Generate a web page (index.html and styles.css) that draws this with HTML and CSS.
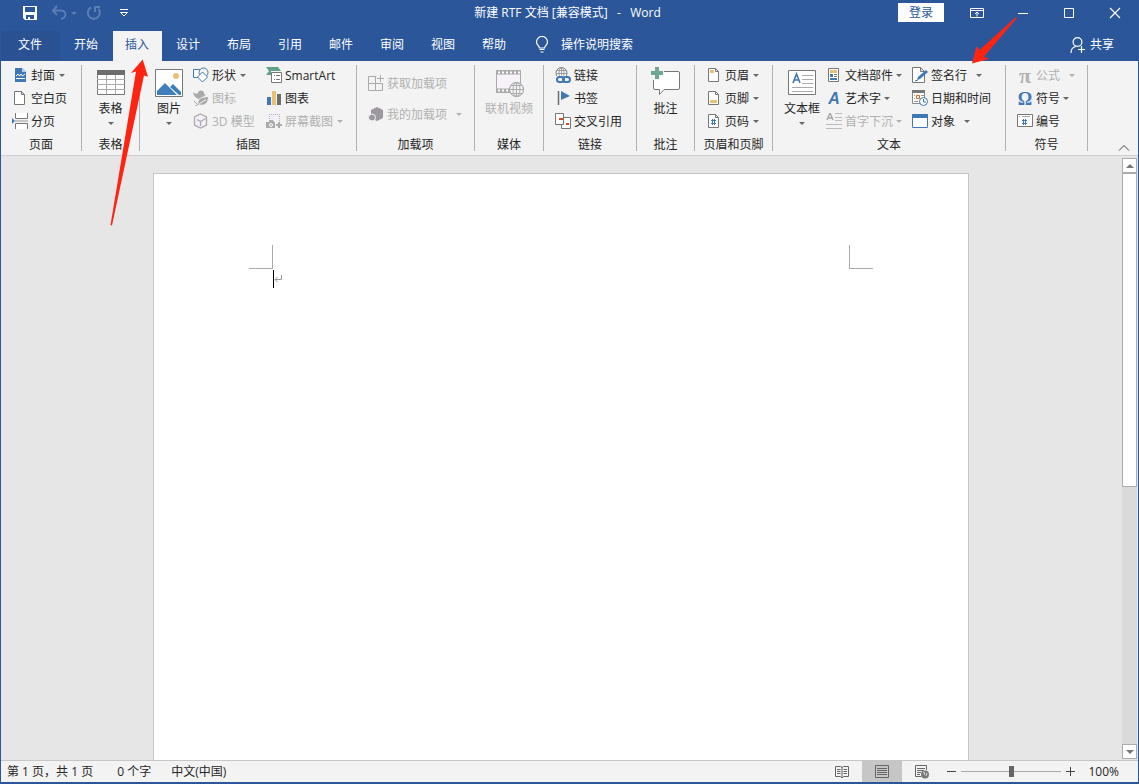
FILE: index.html
```
<!DOCTYPE html>
<html lang="zh-CN">
<head>
<meta charset="utf-8">
<title>新建 RTF 文档 [兼容模式] - Word</title>
<link rel="stylesheet" href="styles.css">
</head>
<body>
<div class="window">
  <header class="titlebar">
    <div class="quick-access">
      <button class="qa-btn" aria-label="保存"><svg width="16" height="16" viewBox="0 0 16 16"><path d="M1 1h14v14H3l-2-2z" fill="#fff"/><path d="M3 2h10v5H3zM4 10h8v4H4z" fill="#2b579a"/><path d="M6 12h2v2H6z" fill="#fff"/></svg></button>
      <button class="qa-btn faded undo" aria-label="撤消"><svg width="16" height="16" viewBox="0 0 16 16"><path d="M6 1L2 5.500l4 4.500M2.500 5.500H10c3 0 4.500 2 4.500 4s-2 4-4.500 4.500" fill="none" stroke="currentColor" stroke-width="2"/></svg><svg class="caret" viewBox="0 0 6 3"><path d="M0 0h6L3 3z"/></svg></button>
      <button class="qa-btn faded redo" aria-label="重复"><svg width="16" height="16" viewBox="0 0 16 16"><path d="M5 2.500A6 6 0 1 0 12.500 4M8 2h6M9 1.500V7" fill="none" stroke="currentColor" stroke-width="2"/></svg></button>
      <button class="qa-btn" aria-label="自定义快速访问工具栏"><svg width="10" height="10" viewBox="0 0 10 10"><path d="M1 1.500h8M1.500 4.500h7L5 8z" fill="none" stroke="#fff"/></svg></button>
    </div>
    <h1 class="title">新建 RTF 文档 [兼容模式]&nbsp;&nbsp; -&nbsp;&nbsp; Word</h1>
    <div class="window-controls">
      <button class="login">登录</button>
      <button class="win-btn" aria-label="功能区显示选项"><svg width="14" height="12" viewBox="0 0 14 12"><path d="M.5 1.500h13v9H.5zM.5 3.500h13M7 9.500V5.500M5 7l2-2 2 2" fill="none" stroke="#fff"/></svg></button>
      <button class="win-btn" aria-label="最小化"><svg width="12" height="12" viewBox="0 0 12 12"><path d="M1 6.500h10" stroke="#fff"/></svg></button>
      <button class="win-btn" aria-label="最大化"><svg width="12" height="12" viewBox="0 0 12 12"><path d="M1.500 1.500h9v9h-9z" fill="none" stroke="#fff"/></svg></button>
      <button class="win-btn" aria-label="关闭"><svg width="12" height="12" viewBox="0 0 12 12"><path d="M1 1l10 10M11 1L1 11" stroke="#fff" stroke-width="1.200"/></svg></button>
    </div>
  </header>

  <nav class="tabs">
    <button class="tab file">文件</button>
    <button class="tab">开始</button>
    <button class="tab active">插入</button>
    <button class="tab">设计</button>
    <button class="tab">布局</button>
    <button class="tab">引用</button>
    <button class="tab">邮件</button>
    <button class="tab">审阅</button>
    <button class="tab">视图</button>
    <button class="tab">帮助</button>
    <button class="tell-me"><svg width="14" height="18" viewBox="0 0 14 18"><path d="M4.500 12c0-2-3-3-3-6a5.300 5.300 0 0 1 11 0c0 3-3 4-3 6zM4.500 13.500h5M5.500 16h3" fill="none" stroke="#fff" stroke-width="1.200"/></svg>操作说明搜索</button>
    <button class="share"><svg width="16" height="18" viewBox="0 0 16 18"><circle cx="7.500" cy="6" r="4.400" fill="none" stroke="#fff" stroke-width="1.200"/><path d="M1 17c0-4 2-6 5-6.500M11.500 10v7M8 13.500h7" fill="none" stroke="#fff" stroke-width="1.200"/></svg>共享</button>
  </nav>

  <section class="ribbon">
    <div class="group g-pages">
      <div class="body">
        <div class="stack">
          <button class="cmd"><svg class="ico" viewBox="0 0 16 16"><path d="M3 1h7l4 4v10H3z" fill="#3f78b5"/><path d="M10 1v4h4" fill="#b5cde6"/><path d="M4 9l2-2 1.500 2L9 7l1.500 2L13 7M4 11.500h9" fill="none" stroke="#fff"/></svg>封面<svg class="caret" viewBox="0 0 6 3"><path d="M0 0h6L3 3z"/></svg></button>
          <button class="cmd"><svg class="ico" viewBox="0 0 16 16"><path d="M2.500 1.500h7l3 3v10h-10zM9.500 1.500v3h3" fill="#fff" stroke="#777"/></svg>空白页</button>
          <button class="cmd"><svg class="ico" viewBox="0 0 16 16"><path d="M3.500 0v5.500h12V0M3.500 16v-5.500h12V16" fill="#fff" stroke="#777"/><path d="M3 8h13" stroke="#999"/><path d="M0 5l3 3-3 3z" fill="#3f78b5"/></svg>分页</button>
        </div>
      </div>
      <div class="label">页面</div>
    </div>

    <div class="group g-table">
      <div class="body">
        <button class="big"><svg class="bico" viewBox="0 0 30 28"><path d="M1.500 1.500h27v24h-27z" fill="#fff" stroke="#777"/><path d="M1 1h28v5H1z" fill="#6d6d6d"/><path d="M1 10.500h28M1 15.500h28M1 20.500h28M10.500 6v19M19.500 6v19" stroke="#aaa"/></svg><span>表格</span><svg class="caret" viewBox="0 0 6 3"><path d="M0 0h6L3 3z"/></svg></button>
      </div>
      <div class="label">表格</div>
    </div>

    <div class="group g-illus">
      <div class="body">
        <button class="big"><svg class="bico" viewBox="0 0 30 28"><path d="M1.500.5h27v27h-27z" fill="#fff" stroke="#777"/><path d="M3 26v-4l8-8 12 12zM16 18l3-3 8 8v3h-2z" fill="#3f7fbc"/><circle cx="22" cy="7" r="3" fill="#e8c173"/></svg><span>图片</span><svg class="caret" viewBox="0 0 6 3"><path d="M0 0h6L3 3z"/></svg></button>
        <div class="stack">
          <button class="cmd"><svg class="ico" viewBox="0 0 16 16"><path d="M.5 2.500h9v8h-9z" fill="#fff" stroke="#3f78b5"/><circle cx="10.500" cy="5.500" r="4.500" fill="#f3f3f3" stroke="#3f78b5"/><path d="M9.500 5l5 5-5 5-5-5z" fill="#fff" stroke="#3f78b5"/></svg>形状<svg class="caret" viewBox="0 0 6 3"><path d="M0 0h6L3 3z"/></svg></button>
          <button class="cmd" disabled><svg class="ico" viewBox="0 0 16 16"><path d="M0 2c2 2 3 2 5 1 0-4 7-3 6 1l2 1-2 1c-1 5-10 4-11-4z" fill="#aaa"/><path d="M5 14.500C4 8 9 7 15.500 6.500 15.500 13 12 17 5 14.500z" fill="#aaa" stroke="#f3f3f3"/><path d="M2 16l4-2M1 11l3 3" stroke="#aaa"/><path d="M6 14l7-4.500" stroke="#f3f3f3"/></svg>图标</button>
          <button class="cmd" disabled><svg class="ico" viewBox="0 0 16 16"><path d="M7.500 1l6 3v8l-6 3-6-3V4zM4 6.500l3.500 2 5-3M7.500 8.500V13" fill="#f5effa" stroke="#aaa" stroke-width="1.300"/></svg>3D 模型</button>
        </div>
        <div class="stack">
          <button class="cmd"><svg class="ico" viewBox="0 0 16 16"><path d="M0 0h12l3 4H5v4H0l3-4z" fill="#5fa189"/><path d="M5.500 5.500h10v10h-10z" fill="#fff" stroke="#777"/><path d="M8 8.500h1M10 8.500h4M8 12.500h1M10 12.500h4" stroke="#777"/></svg>SmartArt</button>
          <button class="cmd"><svg class="ico" viewBox="0 0 16 16"><path d="M1 7h4v8H1z" fill="#3f78b5"/><path d="M6 1h4v14H6z" fill="#e8c173"/><path d="M11 4h4v11h-4z" fill="#6d6d6d"/></svg>图表</button>
          <button class="cmd" disabled><svg class="ico" viewBox="0 0 16 16"><path d="M3.500 8V1.500h10V9" fill="#f5effa" stroke="#b5a9bc" stroke-dasharray="1 1"/><path d="M0 9h3l1-2h3l1 2h1v6H0z" fill="#aaa"/><circle cx="5" cy="12" r="1.500" fill="#aaa" stroke="#fff"/><path d="M13 9v6M10 12h6" stroke="#aaa" stroke-width="2"/></svg>屏幕截图<svg class="caret" viewBox="0 0 6 3"><path d="M0 0h6L3 3z"/></svg></button>
        </div>
      </div>
      <div class="label">插图</div>
    </div>

    <div class="group g-addins">
      <div class="body">
        <div class="stack pair">
          <button class="cmd" disabled><svg class="ico" viewBox="0 0 16 16"><path d="M8.500 1.500h-8v14h14V8.500H.5M7.500 1.500v14M12.500 0v7M9 3.500h7" fill="none" stroke="#aaa"/></svg>获取加载项</button>
          <button class="cmd" disabled><svg class="ico" viewBox="0 0 16 16"><path d="M9 1l6 3v8l-6 3-6-3V4z" fill="#9d989f"/><circle cx="4" cy="11.500" r="3.500" fill="#9d989f" stroke="#f3f3f3"/></svg>我的加载项<svg class="caret far" viewBox="0 0 6 3"><path d="M0 0h6L3 3z"/></svg></button>
        </div>
      </div>
      <div class="label">加载项</div>
    </div>

    <div class="group g-media">
      <div class="body">
        <button class="big" disabled><svg class="bico" viewBox="0 0 30 28"><path d="M2.500 1.500h24v22h-24z" fill="#f7f1fa" stroke="#aaa"/><path d="M2 3.500h25M2 21.500h13" stroke="#aaa" stroke-width="4"/><path d="M4 3.500h22M4 21.500h11" stroke="#fff" stroke-width="2" stroke-dasharray="2 2"/><circle cx="22.500" cy="20.500" r="7" fill="#f5f3f5" stroke="#999"/><path d="M22.500 13.500v14M15.500 20.500h14M17 16.500h11M17 24.500h11" stroke="#aaa"/><ellipse cx="22.500" cy="20.500" rx="3.500" ry="7" fill="none" stroke="#aaa"/></svg><span>联机视频</span></button>
      </div>
      <div class="label">媒体</div>
    </div>

    <div class="group g-links">
      <div class="body">
        <div class="stack">
          <button class="cmd"><svg class="ico" viewBox="0 0 16 16"><circle cx="6.500" cy="6" r="5.500" fill="#fff" stroke="#777"/><path d="M1 6.500h11M2 3.500h9M6.500.500v8" stroke="#999"/><ellipse cx="6.500" cy="6" rx="2.500" ry="5.500" fill="none" stroke="#999"/><path d="M1 9h15v7H1z" fill="#f3f3f3"/><rect x="2" y="10" width="7" height="5" rx="2.500" fill="none" stroke="#3f78b5" stroke-width="2"/><rect x="8" y="10" width="7" height="5" rx="2.500" fill="none" stroke="#3f78b5" stroke-width="2"/></svg>链接</button>
          <button class="cmd"><svg class="ico" viewBox="0 0 16 16"><path d="M3.500 1v14" stroke="#6d6d6d" stroke-width="1.500"/><path d="M6 1l9 5-9 4z" fill="#3f78b5"/></svg>书签</button>
          <button class="cmd"><svg class="ico" viewBox="0 0 16 16"><path d="M6.500 4.500h9v11h-9z" fill="#fff" stroke="#777"/><path d="M.5.500h8v11h-8z" fill="#fff" stroke="#777"/><path d="M4 6h4M11 11h3" stroke="#d64b20" stroke-width="2"/></svg>交叉引用</button>
        </div>
      </div>
      <div class="label">链接</div>
    </div>

    <div class="group g-comment">
      <div class="body">
        <button class="big"><svg class="bico" viewBox="0 0 30 28"><path d="M4 2.500h23q1.500 0 1.500 1.500v15q0 1.500-1.500 1.500H13l-4.500 5v-5H4q-1.500 0-1.500-1.500V4q0-1.500 1.500-1.500z" fill="#fff" stroke="#777"/><path d="M0-1h9v3h4v5H9v4H2V7H0z" fill="#f3f3f3"/><path d="M6 -2v12M0 4h12" stroke="#6fa797" stroke-width="4"/></svg><span>批注</span></button>
      </div>
      <div class="label">批注</div>
    </div>

    <div class="group g-header">
      <div class="body">
        <div class="stack">
          <button class="cmd"><svg class="ico" viewBox="0 0 16 16"><path d="M2.500 1.500h7l3 3v10h-10zM9.500 1.500v3h3" fill="#fff" stroke="#777"/><path d="M4 3h4v3H4z" fill="#e8c173"/></svg>页眉<svg class="caret" viewBox="0 0 6 3"><path d="M0 0h6L3 3z"/></svg></button>
          <button class="cmd"><svg class="ico" viewBox="0 0 16 16"><path d="M2.500 1.500h7l3 3v10h-10zM9.500 1.500v3h3" fill="#fff" stroke="#777"/><path d="M4 10h7v3H4z" fill="#e8c173"/></svg>页脚<svg class="caret" viewBox="0 0 6 3"><path d="M0 0h6L3 3z"/></svg></button>
          <button class="cmd"><svg class="ico" viewBox="0 0 16 16"><path d="M2.500 1.500h7l3 3v10h-10zM9.500 1.500v3h3" fill="#fff" stroke="#777"/><path d="M6.500 6v6M8.500 6v6M5 7.500h5M5 10.500h5" stroke="#3f78b5"/></svg>页码<svg class="caret" viewBox="0 0 6 3"><path d="M0 0h6L3 3z"/></svg></button>
        </div>
      </div>
      <div class="label">页眉和页脚</div>
    </div>

    <div class="group g-text">
      <div class="body">
        <button class="big"><svg class="bico" viewBox="0 0 30 28"><path d="M1.500 1.500h27v24h-27z" fill="#fff" stroke="#777"/><path d="M6 14l3.500-9 3.500 9M7 11h5" fill="none" stroke="#3f78b5" stroke-width="1.600"/><path d="M15 6.500h11M15 10.500h11M15 14.500h11M5 18.500h21M5 22.500h21" stroke="#aaa"/></svg><span>文本框</span><svg class="caret" viewBox="0 0 6 3"><path d="M0 0h6L3 3z"/></svg></button>
        <div class="stack">
          <button class="cmd"><svg class="ico" viewBox="0 0 16 16"><path d="M2.500 1.500h10v13h-10z" fill="#fff" stroke="#777"/><path d="M4 3h7v3H4z" fill="#e8c173"/><path d="M4 7h3v3H4z" fill="#3f78b5"/><path d="M8 7.500h3M8 9.500h3" stroke="#777"/><path d="M4 12h7" stroke="#3f78b5" stroke-width="2"/></svg>文档部件<svg class="caret tight" viewBox="0 0 6 3"><path d="M0 0h6L3 3z"/></svg></button>
          <button class="cmd"><span class="glyph art">A</span>艺术字<svg class="caret tight" viewBox="0 0 6 3"><path d="M0 0h6L3 3z"/></svg></button>
          <button class="cmd" disabled><svg class="ico" viewBox="0 0 16 16"><path d="M1 7l3-7 3 7M2 5h4" fill="none" stroke="#aaa" stroke-width="1.500"/><path d="M9 .5h7M9 4.500h7M9 7.500h7M0 11.500h16M0 15.500h16" stroke="#bbb"/></svg>首字下沉<svg class="caret tight" viewBox="0 0 6 3"><path d="M0 0h6L3 3z"/></svg></button>
        </div>
        <div class="stack">
          <button class="cmd"><svg class="ico" viewBox="0 0 16 16"><path d="M.5.500h8l4 4v11H.5zM8.500.500v4h4" fill="#fff" stroke="#777"/><path d="M5 13l1-3 8-7 2 2-8 7z" fill="#3f78b5"/><path d="M3 14l3-1" stroke="#3f78b5"/></svg>签名行<svg class="caret far" viewBox="0 0 6 3"><path d="M0 0h6L3 3z"/></svg></button>
          <button class="cmd"><svg class="ico" viewBox="0 0 16 16"><path d="M.5 1.500h12v12H.5z" fill="#fff" stroke="#888"/><path d="M0 0h13v3H0z" fill="#777"/><path d="M2 5.500h1M9 5.500h3M2 8.500h1M2 11.500h4" stroke="#999"/><path d="M4.500 5.500h3v3h-3z" fill="#fff" stroke="#d66b20"/><circle cx="11.500" cy="11.500" r="4" fill="#fff" stroke="#3f78b5"/><path d="M11.500 9v3h2.500" fill="none" stroke="#3f78b5"/></svg>日期和时间</button>
          <button class="cmd"><svg class="ico" viewBox="0 0 16 16"><path d="M.5 1.500h15v13H.5z" fill="#fff" stroke="#3f78b5"/><path d="M0 1h16v4H0z" fill="#3f78b5"/></svg>对象<svg class="caret far" viewBox="0 0 6 3"><path d="M0 0h6L3 3z"/></svg></button>
        </div>
      </div>
      <div class="label">文本</div>
    </div>

    <div class="group g-symbols">
      <div class="body">
        <div class="stack">
          <button class="cmd" disabled><span class="glyph pi">π</span>公式<svg class="caret far" viewBox="0 0 6 3"><path d="M0 0h6L3 3z"/></svg></button>
          <button class="cmd"><span class="glyph omega">Ω</span>符号<svg class="caret tight" viewBox="0 0 6 3"><path d="M0 0h6L3 3z"/></svg></button>
          <button class="cmd"><svg class="ico" viewBox="0 0 16 16"><path d="M.5 1.500h15v12H.5z" fill="#fff" stroke="#777"/><path d="M2 3.500h1M5 3.500h8" stroke="#aaa"/><path d="M6.500 6v6M8.500 6v6M5 7.500h5M5 10.500h5" stroke="#3f78b5"/></svg>编号</button>
        </div>
      </div>
      <div class="label">符号</div>
    </div>
    <button class="collapse" aria-label="折叠功能区"><svg width="12" height="6" viewBox="0 0 12 6"><path d="M1 5.500l5-5 5 5" fill="none" stroke="#444"/></svg></button>
  </section>

  <main class="workspace">
    <div class="canvas">
      <article class="page">
        <div class="margins"><i class="corner left"></i><i class="corner right"></i></div>
        <p class="line"><span class="cursor"></span><svg width="8" height="8" viewBox="0 0 8 8"><path d="M7.500 0v4.500H1M3.500 2L1 4.500 3.500 7" fill="none" stroke="#999"/></svg></p>
      </article>
    </div>
    <div class="scrollbar">
      <button class="scroll-btn" aria-label="向上滚动"><svg width="8" height="4" viewBox="0 0 8 4"><path d="M0 4h8L4 0z" fill="#777"/></svg></button>
      <div class="track"><div class="thumb"></div></div>
      <button class="scroll-btn" aria-label="向下滚动"><svg width="8" height="4" viewBox="0 0 8 4"><path d="M0 0h8L4 4z" fill="#777"/></svg></button>
    </div>
  </main>

  <footer class="status">
    <span class="page-count">第 1 页，共 1 页</span>
    <span class="word-count">0 个字</span>
    <span>中文(中国)</span>
    <div class="views">
      <button class="view" aria-label="阅读视图"><svg width="14" height="14" viewBox="0 0 14 14"><path d="M.5 1.500h5l1.500 1 1.500-1h5v10h-5L7 13l-1.500-1.500h-5zM7 2v11M2 4.500h3.500M2 6.500h3.500M2 8.500h3.500M8.500 4.500H12M8.500 6.500H12M8.500 8.500H12" fill="none" stroke="#666"/></svg></button>
      <button class="view on" aria-label="页面视图"><svg width="14" height="14" viewBox="0 0 14 14"><path d="M.5.500h13v12H.5zM2 3.500h10M2 5.500h10M2 7.500h10M2 9.500h10" fill="none" stroke="#666"/></svg></button>
      <button class="view" aria-label="Web 版式视图"><svg width="14" height="14" viewBox="0 0 14 14"><path d="M6 11.500H.5V.500h11V5M2 3.500h8M2 5.500h7M2 7.500h4M2 9.500h3" fill="none" stroke="#666"/><circle cx="10" cy="9.500" r="4" fill="#777"/><path d="M8 7l2 1-1 2M12 8l-1 3" fill="none" stroke="#ddd"/></svg></button>
      <button class="zoom-btn" aria-label="缩小"><svg width="9" height="9" viewBox="0 0 9 9"><path d="M0 4.500h9" stroke="#444"/></svg></button>
      <input class="zoom" type="range" min="0" max="100" value="50" aria-label="显示比例">
      <button class="zoom-btn" aria-label="放大"><svg width="9" height="9" viewBox="0 0 9 9"><path d="M0 4.500h9M4.500 0v9" stroke="#444"/></svg></button>
      <span class="percent">100%</span>
    </div>
  </footer>
  <svg class="arrows" width="1139" height="240" viewBox="0 0 1139 240" aria-hidden="true"><path d="M142.700 59.500L131 73l5-1.500L110.500 225l1.500.500L144 75.500l4 1.200zM972 63.500l4.500-17.500 3 4L1016 17l1 1-33 38.500 5 2.500z" fill="#ff2312"/></svg>
</div>
</body>
</html>
```

FILE: styles.css
```
* { box-sizing: border-box; }
body { margin: 0; font: 12px/16px "Open Sans", "Noto Sans CJK SC", sans-serif; color: #262626; }
button { font: inherit; color: inherit; background: none; border: 0; padding: 0; margin: 0; white-space: nowrap; }
svg { flex: none; display: block; }

.window { position: relative; display: flex; flex-direction: column; height: 100vh; overflow: hidden; border: 1px solid #2b579a; border-top: 0; border-bottom-width: 2px; background: #2b579a; }

.titlebar { display: grid; grid-template-columns: 1fr auto 1fr; height: 31px; color: #fff; }
.quick-access { display: flex; align-items: center; gap: 17px; padding: 0 0 5px 21px; }
.qa-btn { display: flex; align-items: center; }
.undo { margin-left: -4px; }
.redo { margin-left: -8px; }
.faded { color: #5a7db4; }
.title { margin: 0; padding-right: 4px; font-size: 12px; line-height: 26px; font-weight: 400; }
.window-controls { display: flex; justify-content: flex-end; height: 25px; }
.login { width: 46px; height: 19px; margin: 3px 10px 0 0; background: #fff; color: #2b579a; }
.win-btn { display: flex; align-items: center; justify-content: center; width: 46px; }

.tabs { display: flex; gap: 2px; height: 30px; color: #fff; }
.tab { width: 49px; padding: 0 1px 2px 0; }
.tab.file { width: 59px; background: #2a5293; }
.tab.active { background: #f3f3f3; color: #2b579a; }
.tell-me, .share { display: flex; align-items: center; }
.tell-me { gap: 12px; margin-left: 14px; padding-bottom: 2px; }
.share { gap: 4px; margin-left: auto; padding: 0 24px 2px 0; }

.ribbon { display: flex; padding: 4px 0; background: #f3f3f3; border-bottom: 1px solid #d0d0d0; }
.group { flex: none; height: 86px; border-right: 1px solid #b1b1b1; }
.body { display: flex; height: 67px; padding-left: 11px; }
.label { margin-top: 6px; line-height: 13px; text-align: center; white-space: nowrap; }
.stack { display: flex; flex-direction: column; gap: 2px; }
.pair { gap: 10px; padding-top: 8px; }
.cmd { display: flex; align-items: center; gap: 3px; height: 21px; }
.ico { width: 16px; height: 16px; margin-bottom: 1px; }
.big { display: flex; flex-direction: column; align-items: center; padding-top: 4px; }
.bico { width: 30px; height: 28px; margin-bottom: 4px; overflow: visible; }
.caret { width: 6px; height: 3px; fill: #666; }
.cmd .caret { margin-left: 1px; }
.cmd .caret.tight { margin-left: 0; }
.cmd .caret.far { margin-left: 6px; }
.big .caret { margin-top: 5px; }
button:disabled { color: #b1b1b1; }
button:disabled .caret { fill: #b1b1b1; }
.faded .caret { margin-left: 4px; fill: #5a7db4; }
.glyph { width: 16px; text-align: center; font: bold 18px/20px "Liberation Serif", serif; }
.omega { color: #3f78b5; }
.pi { font-size: 22px; }
.art { color: #3f78b5; font: italic bold 16px/20px "Liberation Sans", sans-serif; }

.g-pages { width: 81px; }
.g-table { width: 58px; }
.g-illus { width: 217px; }
.g-addins { width: 118px; }
.g-media { width: 69px; }
.g-links { width: 93px; }
.g-comment { width: 58px; }
.g-header { width: 78px; }
.g-text { width: 233px; }
.g-symbols { width: 82px; }
.g-table .body, .g-media .body, .g-comment .body { justify-content: center; padding-left: 0; }
.g-illus .body { display: grid; grid-template-columns: 30px 64px auto; justify-content: start; gap: 9px; padding-left: 14px; }
.g-text .body { display: grid; grid-template-columns: 36px 80px auto; justify-content: start; gap: 6px; }
.collapse { align-self: flex-end; margin-left: auto; padding-right: 8px; }

.workspace { flex: 1; min-height: 0; display: flex; background: #e6e6e6; }
.canvas { flex: 1; display: flex; justify-content: center; padding: 17px 2px 0 0; overflow: hidden; }
.page { width: 816px; padding: 71px 95px 0; background: #fff; border: 1px solid #c6c6c6; border-bottom: 0; }
.margins { display: flex; justify-content: space-between; }
.corner { width: 24px; height: 24px; border-bottom: 1px solid #aaa; }
.corner.left { border-right: 1px solid #aaa; }
.corner.right { border-left: 1px solid #aaa; }
.line { display: flex; align-items: center; margin: 1px 0 0 24px; }
.cursor { width: 1px; height: 18px; background: #000; }
.scrollbar { display: flex; flex-direction: column; width: 16px; padding: 2px 1px 1px 0; }
.scroll-btn { display: flex; align-items: center; justify-content: center; height: 15px; background: #fff; border: 1px solid #ababab; }
.track { flex: 1; background: #dadada; }
.thumb { height: 55%; background: #fff; border: 1px solid #ababab; }

.status { display: flex; align-items: center; height: 22px; padding-left: 6px; background: #f3f3f3; border-top: 1px solid #c6c6c6; white-space: nowrap; }
.page-count { margin-right: 24px; }
.word-count { margin-right: 20px; }
.views { display: flex; align-items: center; align-self: stretch; margin-left: auto; padding-right: 19px; }
.view { display: flex; align-items: center; justify-content: center; width: 40px; height: 100%; }
.view.on { background: #c6c6c6; }
.zoom-btn { padding: 0 5px; }
.zoom { appearance: none; width: 100px; height: 12px; margin: 0; background: linear-gradient(#aaa, #aaa) center / 100% 1px no-repeat; }
.zoom::-webkit-slider-thumb { appearance: none; width: 5px; height: 11px; background: #666; }
.percent { margin-left: 8px; }

.arrows { position: absolute; top: 0; left: -1px; pointer-events: none; }
```
